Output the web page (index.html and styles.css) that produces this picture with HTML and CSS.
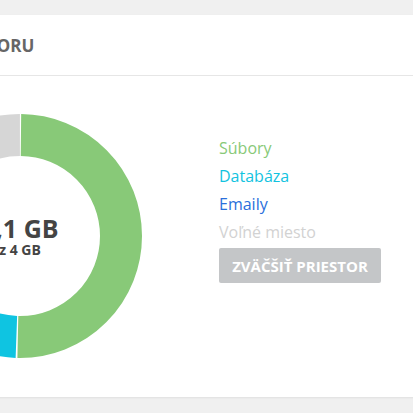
FILE: index.html
```html
<!DOCTYPE html>
<html lang="sk">
<head>
<meta charset="utf-8">
<link rel="stylesheet" href="styles.css">
</head>
<body>
<section class="card">
  <header class="card-head">
    <h2 class="card-title">Využitie priestoru</h2>
  </header>
  <div class="card-body">
    <div class="chart">
      <svg class="donut" width="244" height="244" viewBox="0 0 244 244">
        <g transform="rotate(-90 122 122)" fill="none" stroke-width="42">
          <circle cx="122" cy="122" r="101" stroke="#88c978" stroke-dasharray="318 1000" stroke-dashoffset="-1"/>
          <circle cx="122" cy="122" r="101" stroke="#0fc4e1" stroke-dasharray="74.5 1000" stroke-dashoffset="-320.5"/>
          <circle cx="122" cy="122" r="101" stroke="#2c6fdc" stroke-dasharray="95 1000" stroke-dashoffset="-396.5"/>
          <circle cx="122" cy="122" r="101" stroke="#d6d6d6" stroke-dasharray="140.5 1000" stroke-dashoffset="-493"/>
        </g>
      </svg>
      <div class="chart-label">
        <div class="chart-value">3,1 GB</div>
        <div class="chart-total">z 4 GB</div>
      </div>
    </div>
    <div class="legend">
      <ul class="legend-list">
        <li class="legend-item files">Súbory</li>
        <li class="legend-item db">Databáza</li>
        <li class="legend-item mail">Emaily</li>
        <li class="legend-item free">Voľné miesto</li>
      </ul>
      <button class="btn-grow" type="button">Zväčšiť priestor</button>
    </div>
  </div>
</section>
</body>
</html>
```

FILE: styles.css
```css
html, body {
  margin: 0;
  padding: 0;
}
body {
  background: #f0f0f0;
  font-family: "Open Sans", "Noto Sans", sans-serif;
  overflow: hidden;
  width: 413px;
  height: 413px;
  padding-top: 15px;
  box-sizing: border-box;
}
.card {
  background: #fff;
  width: 700px;
  margin-left: -222px;
  box-shadow: 0 1px 2px rgba(0, 0, 0, 0.07);
}
.card-head {
  height: 60px;
  border-bottom: 1px solid #e6e6e6;
  display: flex;
  align-items: center;
  padding-left: 83px;
}
.card-title {
  margin: 0;
  font-size: 17px;
  font-weight: 700;
  color: #666;
  text-transform: uppercase;
  line-height: 1;
}
.card-body {
  display: flex;
  align-items: flex-start;
  padding: 38px 0 39px 120px;
}
.chart {
  display: grid;
  width: 244px;
  height: 244px;
  flex: none;
}
.donut, .chart-label {
  grid-area: 1 / 1;
}
.donut {
  display: block;
}
.chart-label {
  align-self: center;
  justify-self: center;
  text-align: center;
  color: #444;
  font-weight: 700;
  padding-top: 2px;
}
.chart-value {
  font-size: 25px;
  line-height: 26px;
}
.chart-total {
  font-size: 14px;
  line-height: 18px;
}
.legend {
  margin-left: 77px;
  padding-top: 20px;
}
.legend-list {
  list-style: none;
  margin: 0;
  padding: 0;
}
.legend-item {
  font-size: 16px;
  line-height: 28px;
}
.files { color: #88c978; }
.db { color: #12c3df; }
.mail { color: #2a6fdb; }
.free { color: #d2d2d2; }
.btn-grow {
  margin-top: 2px;
  width: 162px;
  height: 35px;
  border: 0;
  border-radius: 2px;
  background: #c4c6c8;
  color: #fff;
  font-family: inherit;
  font-size: 15px;
  font-weight: 700;
  text-transform: uppercase;
  padding: 0;
}
```
